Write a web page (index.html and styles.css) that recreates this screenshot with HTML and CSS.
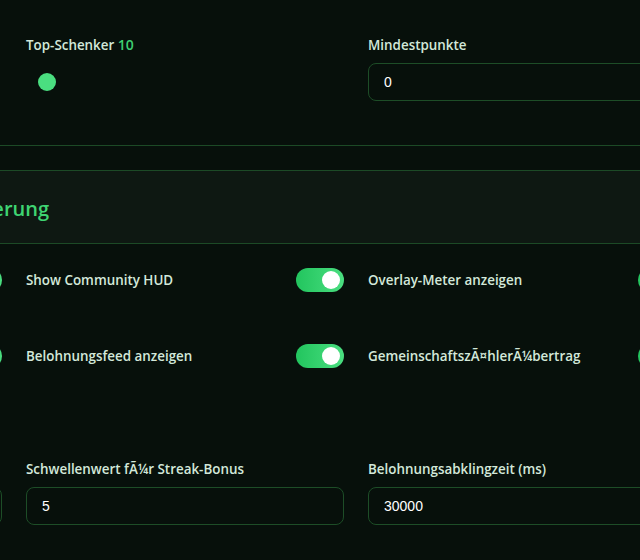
FILE: index.html
```html
<!DOCTYPE html>
<html lang="de">
<head>
  <meta charset="UTF-8">
  <meta name="viewport" content="width=device-width, initial-scale=1.0">
  <title>Overlay-Einstellungen</title>
  <link rel="stylesheet" href="styles.css">
</head>
<body>
  <div class="page">
    <section class="block top">
      <div class="grid">
        <div class="field">
          <label>Top-Spender <span class="val">5</span></label>
          <div class="slider"><span class="thumb"></span></div>
        </div>
        <div class="field">
          <label>Top-Schenker <span class="val">10</span></label>
          <div class="slider"><span class="thumb"></span></div>
        </div>
        <div class="field">
          <label>Mindestpunkte</label>
          <input type="text" value="0">
        </div>
      </div>
    </section>

    <section class="block">
      <div class="band">
        <h2>Overlay- und Community-Steuerung</h2>
      </div>
      <div class="grid toggles">
        <div class="row">
          <span>Show Alerts</span>
          <span class="switch"></span>
        </div>
        <div class="row">
          <span>Show Community HUD</span>
          <span class="switch"></span>
        </div>
        <div class="row">
          <span>Overlay-Meter anzeigen</span>
          <span class="switch"></span>
        </div>
        <div class="row">
          <span>Ziele anzeigen</span>
          <span class="switch"></span>
        </div>
        <div class="row">
          <span>Belohnungsfeed anzeigen</span>
          <span class="switch"></span>
        </div>
        <div class="row">
          <span>GemeinschaftszÃ¤hlerÃ¼bertrag</span>
          <span class="switch"></span>
        </div>
      </div>
      <div class="grid fields">
        <div class="field">
          <label>Streak-Fenster (s)</label>
          <input type="text" value="60">
        </div>
        <div class="field">
          <label>Schwellenwert fÃ¼r Streak-Bonus</label>
          <input type="text" value="5">
        </div>
        <div class="field">
          <label>Belohnungsabklingzeit (ms)</label>
          <input type="text" value="30000">
        </div>
      </div>
    </section>
  </div>
</body>
</html>
```

FILE: styles.css
```css
body {
  margin: 0;
  background: #07100b;
  color: #d3e8da;
  font-family: "Open Sans", "Noto Sans", sans-serif;
  overflow: hidden;
}
.page {
  margin-left: -342px;
  width: 1052px;
}
.grid {
  display: grid;
  grid-template-columns: repeat(3, 318px);
  column-gap: 24px;
  padding: 0 26px;
}
.top {
  padding-top: 36px;
  padding-bottom: 44px;
  border-bottom: 1px solid #1c4a26;
}
.field {
  display: flex;
  flex-direction: column;
  gap: 9px;
}
.field label {
  font-size: 13.4px;
  font-weight: 600;
  line-height: 18px;
}
.val {
  color: #3ecf72;
  font-weight: 600;
  font-size: 14px;
}
.field input {
  box-sizing: border-box;
  height: 38px;
  width: 100%;
  background: #07100b;
  border: 1px solid #1d4d27;
  border-radius: 8px;
  padding: 0 15px;
  color: #ffffff;
  font-family: "Liberation Sans", Arial, sans-serif;
  font-size: 14px;
  outline: none;
}
.slider {
  height: 38px;
  display: flex;
  align-items: center;
  padding-left: 12px;
}
.thumb {
  width: 18px;
  height: 18px;
  border-radius: 50%;
  background: #4ade80;
}
.band {
  margin-top: 24px;
  background: #0e1812;
  border-top: 1px solid #1c4a26;
  border-bottom: 1px solid #1c4a26;
  height: 72px;
  display: flex;
  align-items: center;
  padding-left: 43px;
}
.band h2 {
  margin: 2px 0 0;
  color: #3fd472;
  font-size: 20px;
  font-weight: 600;
}
.toggles {
  margin-top: 24px;
  row-gap: 52px;
}
.row {
  display: flex;
  align-items: center;
  justify-content: space-between;
  height: 24px;
  font-size: 13.4px;
  font-weight: 600;
}
.switch {
  width: 48px;
  height: 24px;
  border-radius: 12px;
  background: linear-gradient(90deg, #22c55e, #4ade80);
  position: relative;
}
.switch::after {
  content: "";
  position: absolute;
  right: 4px;
  top: 3px;
  width: 18px;
  height: 18px;
  border-radius: 50%;
  background: #ffffff;
}
.fields {
  margin-top: 92px;
}
```
